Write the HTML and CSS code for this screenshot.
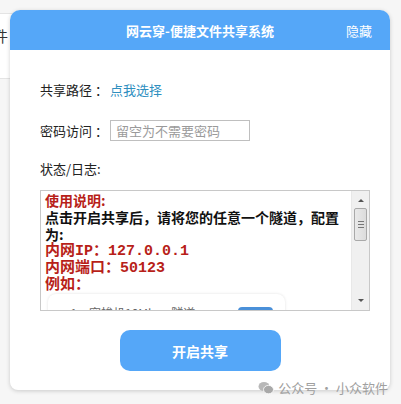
FILE: index.html
```html
<!DOCTYPE html>
<html lang="zh-CN">
<head>
<meta charset="UTF-8">
<meta name="viewport" content="width=device-width, initial-scale=1.0">
<title>网云穿-便捷文件共享系统</title>
<link rel="stylesheet" href="styles.css">
</head>
<body>
<div class="behind">
  <div class="behind-text">文件</div>
  <div class="behind-text small">ab</div>
</div>

<div class="dialog">
  <div class="dialog-header">
    <span class="dialog-title">网云穿-便捷文件共享系统</span>
    <span class="dialog-hide">隐藏</span>
  </div>
  <div class="dialog-body">
    <div class="row row-path">
      <span class="label">共享路径 ：</span>
      <a class="link">点我选择</a>
    </div>
    <div class="row row-pass">
      <span class="label">密码访问 ：</span>
      <input class="pass-input" type="text" placeholder="留空为不需要密码">
    </div>
    <div class="row row-log">
      <span class="label">状态/日志:</span>
    </div>
    <div class="log">
      <div class="log-content">
        <div class="red">使用说明:</div>
        <div>点击开启共享后，请将您的任意一个隧道，配置为:</div>
        <div class="red big">内网IP：127.0.0.1</div>
        <div class="red big">内网端口：50123</div>
        <div class="red big">例如：</div>
        <div class="example">
          <span class="ex-num">1</span>
          <span class="ex-name">穿梭机10Mbps 隧道</span>
          <span class="ex-btn"></span>
        </div>
      </div>
      <div class="scrollbar">
        <div class="arrow up"></div>
        <div class="thumb"><span></span><span></span><span></span></div>
        <div class="track"></div>
        <div class="arrow down"></div>
      </div>
    </div>
    <div class="actions">
      <button class="start-btn">开启共享</button>
    </div>
  </div>
</div>

<div class="watermark">
  <svg width="16" height="14" viewBox="0 0 16 14">
    <ellipse cx="6" cy="5.5" rx="5.5" ry="4.6" fill="#b8b8b8"/>
    <ellipse cx="10.5" cy="8.6" rx="5" ry="4.2" fill="#a9a9a9" stroke="#fff" stroke-width="0.8"/>
  </svg>
  <span>公众号 · 小众软件</span>
</div>
</body>
</html>
```
FILE: styles.css
```css
html, body {
  margin: 0;
  padding: 0;
}
body {
  width: 401px;
  height: 404px;
  background: #f6f6f6;
  font-family: "Noto Sans CJK SC", "Noto Sans", sans-serif;
  position: relative;
  overflow: hidden;
}
.behind {
  position: absolute;
  left: -22px;
  top: 13px;
  width: 60px;
  height: 66px;
  background: #fff;
  border-top: 1px solid #e4e4e4;
  border-bottom: 1px solid #e4e4e4;
  padding-top: 12px;
  box-sizing: border-box;
}
.behind-text {
  font-size: 15px;
  line-height: 20px;
  color: #333;
}
.behind-text.small {
  color: #555;
}
.dialog {
  position: absolute;
  left: 10px;
  top: 10px;
  width: 380px;
  height: 380px;
  background: #fff;
  border-radius: 10px 10px 8px 8px;
  box-shadow: 0 1px 4px rgba(0, 0, 0, 0.18);
  overflow: hidden;
}
.dialog-header {
  height: 40px;
  background: #55a7f8;
  color: #fff;
  display: flex;
  align-items: center;
  justify-content: center;
  position: relative;
}
.dialog-title {
  font-size: 13px;
  font-weight: bold;
}
.dialog-hide {
  position: absolute;
  right: 18px;
  font-size: 13px;
}
.dialog-body {
  padding: 29px 20px 0 30px;
}
.row {
  display: flex;
  align-items: center;
  font-size: 13px;
  color: #222;
}
.row-path {
  height: 20px;
}
.row-pass {
  margin-top: 21px;
  height: 21px;
}
.row-log {
  margin-top: 17px;
  height: 20px;
}
.label {
  width: 70px;
}
.link {
  color: #2f8fbf;
  cursor: pointer;
}
.pass-input {
  width: 140px;
  height: 21px;
  box-sizing: border-box;
  border: 1px solid #bfbfbf;
  padding: 0 5px;
  font-family: inherit;
  font-size: 13px;
  outline: none;
}
.pass-input::placeholder {
  color: #9a9a9a;
}
.log {
  margin-top: 12px;
  width: 330px;
  height: 121px;
  box-sizing: border-box;
  border: 1px solid #c8c8c8;
  display: flex;
  overflow: hidden;
}
.log-content {
  flex: 1;
  padding: 1px 0 0 4px;
  font-size: 14px;
  line-height: 17px;
  font-weight: bold;
  color: #111;
  overflow: hidden;
}
.red {
  color: #b81f19;
}
.big {
  font-family: "Liberation Mono", "Noto Sans CJK SC", monospace;
  font-size: 15px;
}
.example {
  margin: 0 0 0 3px;
  width: 237px;
  height: 40px;
  border-radius: 8px;
  box-shadow: 0 0 3px rgba(0, 0, 0, 0.12);
  display: flex;
  align-items: flex-start;
  padding-top: 10px;
  box-sizing: border-box;
  font-weight: normal;
  font-family: "Noto Sans CJK SC", sans-serif;
  font-size: 12px;
  color: #666;
}
.ex-num {
  margin-left: 23px;
  width: 18px;
  font-size: 10px;
}
.ex-name {
  flex: 1;
}
.ex-btn {
  width: 35px;
  height: 20px;
  margin: 3px 12px 0 0;
  background: #4a90d9;
  border-radius: 4px;
}
.scrollbar {
  width: 17px;
  background: #f0f0f0;
  border-left: 1px solid #e8e8e8;
  display: flex;
  flex-direction: column;
  align-items: center;
}
.arrow {
  width: 0;
  height: 0;
  border-left: 3px solid transparent;
  border-right: 3px solid transparent;
}
.arrow.up {
  margin-top: 8px;
  border-bottom: 3px solid #555;
}
.arrow.down {
  margin-bottom: 8px;
  border-top: 3px solid #555;
}
.thumb {
  margin-top: 6px;
  width: 13px;
  height: 33px;
  box-sizing: border-box;
  border: 1px solid #a9a9a9;
  border-radius: 2px;
  background: linear-gradient(to right, #e9e9e9, #dcdcdc);
  display: flex;
  flex-direction: column;
  align-items: center;
  justify-content: center;
  gap: 2px;
}
.thumb span {
  width: 6px;
  height: 1px;
  background: #777;
}
.track {
  flex: 1;
}
.actions {
  display: flex;
  justify-content: center;
  margin-top: 19px;
  padding-right: 10px;
}
.start-btn {
  width: 161px;
  height: 41px;
  border: none;
  border-radius: 10px;
  background: #55a7f8;
  color: #fff;
  font-family: inherit;
  font-size: 14px;
  font-weight: bold;
  cursor: pointer;
}
.watermark {
  position: absolute;
  right: 13px;
  bottom: 7px;
  display: flex;
  align-items: center;
  gap: 4px;
  color: #a0a0a0;
  font-size: 13px;
}
```
